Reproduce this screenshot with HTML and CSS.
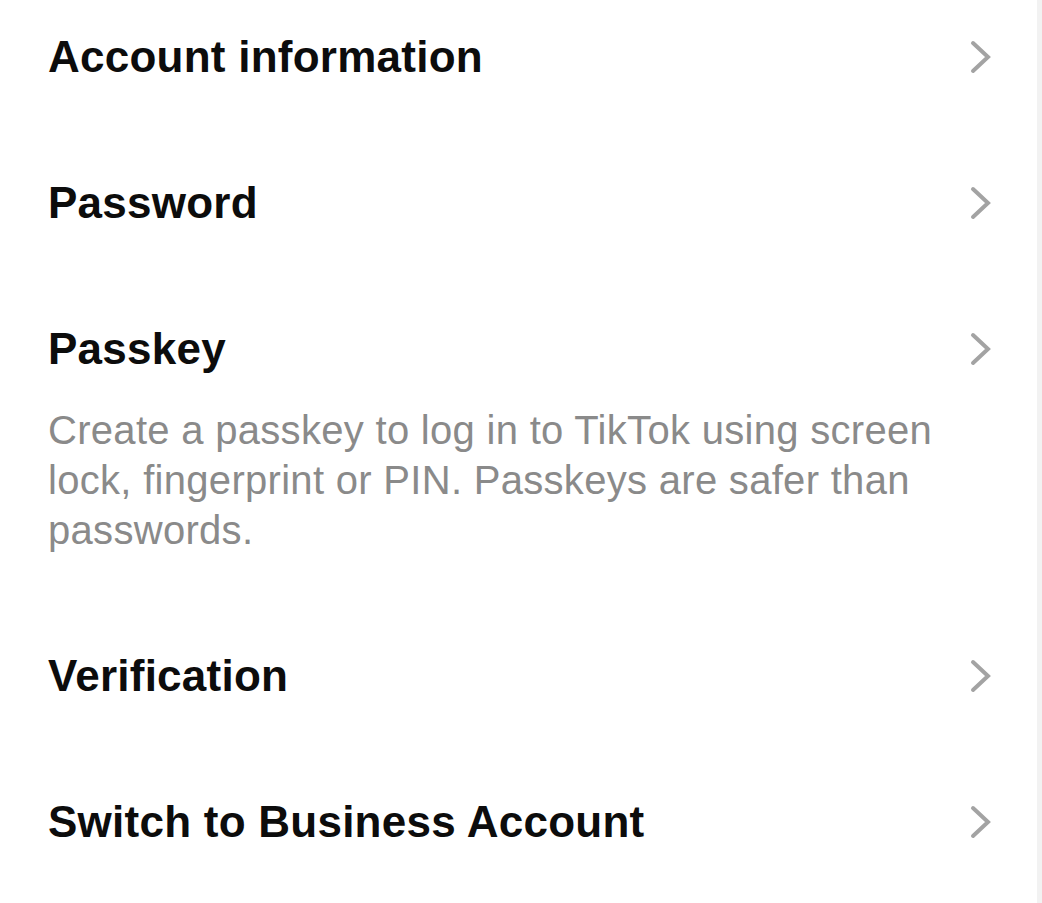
FILE: index.html
```html
<!DOCTYPE html>
<html lang="en">
<head>
    <meta charset="UTF-8">
    <meta name="viewport" content="width=device-width, initial-scale=1.0">
    <title>Account</title>
    <link rel="stylesheet" href="styles.css">
</head>
<body>
    <div class="page">
        <ul class="settings-list">
            <li class="settings-item">
                <div class="item-row">
                    <span class="item-title">Account information</span>
                    <svg class="chevron" width="22" height="34" viewBox="0 0 22 34"><polyline points="3,3 18,17 3,31"/></svg>
                </div>
            </li>
            <li class="settings-item">
                <div class="item-row">
                    <span class="item-title">Password</span>
                    <svg class="chevron" width="22" height="34" viewBox="0 0 22 34"><polyline points="3,3 18,17 3,31"/></svg>
                </div>
            </li>
            <li class="settings-item">
                <div class="item-row">
                    <span class="item-title">Passkey</span>
                    <svg class="chevron" width="22" height="34" viewBox="0 0 22 34"><polyline points="3,3 18,17 3,31"/></svg>
                </div>
                <p class="item-desc">Create a passkey to log in to TikTok using screen lock, fingerprint or PIN. Passkeys are safer than passwords.</p>
            </li>
            <li class="settings-item">
                <div class="item-row">
                    <span class="item-title">Verification</span>
                    <svg class="chevron" width="22" height="34" viewBox="0 0 22 34"><polyline points="3,3 18,17 3,31"/></svg>
                </div>
            </li>
            <li class="settings-item">
                <div class="item-row">
                    <span class="item-title">Switch to Business Account</span>
                    <svg class="chevron" width="22" height="34" viewBox="0 0 22 34"><polyline points="3,3 18,17 3,31"/></svg>
                </div>
            </li>
        </ul>
    </div>
</body>
</html>
```

FILE: styles.css
```css
body {
    margin: 0;
    padding: 0;
    background-color: #f2f2f2;
    font-family: "Liberation Sans", Arial, sans-serif;
}
.page {
    width: 1037px;
    height: 903px;
    background-color: #fff;
    overflow: hidden;
}
.settings-list {
    list-style: none;
    margin: 0;
    padding: 0;
}
.settings-item {
    padding: 47px 50px 47px 48px;
}
.settings-item:first-child {
    padding-top: 31px;
}
.item-row {
    display: flex;
    align-items: center;
    justify-content: space-between;
    height: 52px;
}
.item-title {
    font-size: 44px;
    font-weight: bold;
    letter-spacing: 0.25px;
    color: #0c0c0c;
}
.chevron {
    margin-right: -5px;
}
.chevron polyline {
    fill: none;
    stroke: #a3a3a3;
    stroke-width: 4;
    stroke-linecap: round;
    stroke-linejoin: miter;
}
.item-desc {
    margin: 30px 0 1px;
    font-size: 40px;
    line-height: 50px;
    letter-spacing: 0.3px;
    color: #8a8a8a;
}
```
